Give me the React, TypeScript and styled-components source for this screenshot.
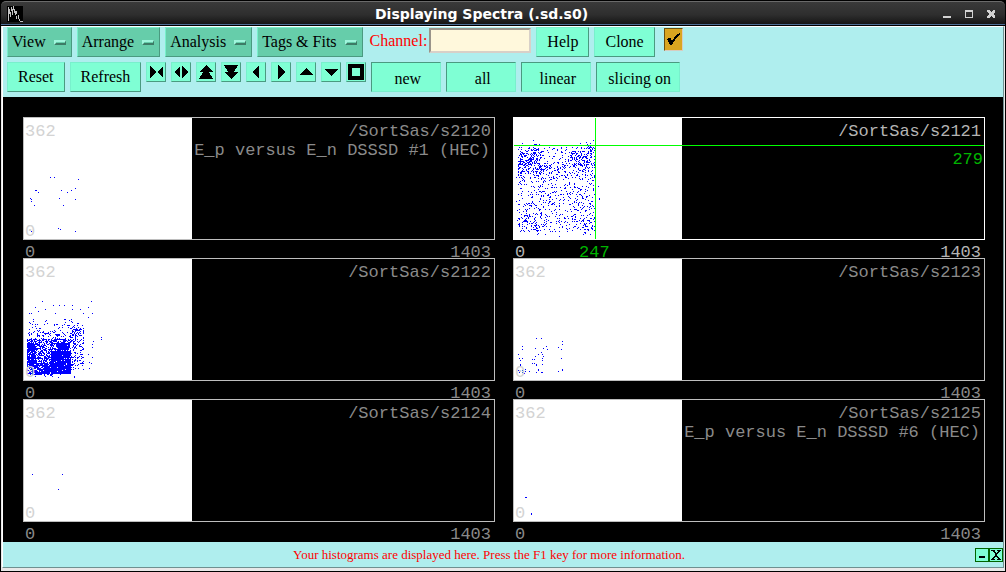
import React from "react";
import styled, { createGlobalStyle, css } from "styled-components";

const GlobalStyle = createGlobalStyle`
  * { box-sizing: border-box; }
  html, body { margin: 0; padding: 0; background: #000; }
  button, input { font: inherit; margin: 0; }
`;

const serif = `"Liberation Serif", "Times New Roman", serif`;
const mono = `"Liberation Mono", "Courier New", monospace`;

const raised = css`
  border: 1px solid;
  border-color: #78f0cc #4a9a80 #4a9a80 #78f0cc;
`;
const sunken = css`
  border: 1px solid;
  border-color: #4a9a80 #78f0cc #78f0cc #4a9a80;
`;

const Window = styled.div`
  display: flex;
  flex-direction: column;
  min-height: 100vh;
  padding: 1px;
  background: #000;
  color: #000;
  font: 16px/18px ${serif};
`;

const TitleBar = styled.header`
  display: flex;
  align-items: center;
  height: 25px;
  padding: 0 7px 0 6px;
  border-top: 1px solid #6a6a6a;
  border-bottom: 1px solid #000;
  border-radius: 5px 5px 0 0;
  background: linear-gradient(#3a3a3a, #2e2e2e 55%, #171717 94%, #4e6f96 95%);
`;

const Title = styled.h1`
  flex: 1;
  margin: 0;
  text-align: center;
  color: #fff;
  font: bold 14px/20px "DejaVu Sans", sans-serif;
`;

const WindowControls = styled.div`
  display: flex;
  gap: 8px;
`;

const ControlButton = styled.button`
  display: flex;
  align-items: center;
  justify-content: center;
  width: 14px;
  height: 16px;
  padding: 0;
  border: 0;
  background: none;
`;

const Client = styled.main`
  flex: 1;
  display: flex;
  flex-direction: column;
  border: 1px solid;
  border-color: #fff #6f9090 #6f9090 #fff;
  background: #000;
`;

const Frame = styled.div`
  flex: 1;
  display: flex;
  padding: 0 1px 3px;
  background: #e8e8e8;
`;

const Toolbar = styled.div`
  display: flex;
  flex-direction: column;
  gap: 5px;
  padding: 0 4px 5px;
  background: #afeeee;
`;

const ToolRow = styled.div`
  display: flex;
  align-items: flex-start;
  gap: 5px;
`;

const PushButton = styled.button<{ $set?: boolean }>`
  height: 30px;
  padding: 0 10px;
  background: #7fffd4;
  color: #000;
  ${(p) => (p.$set ? sunken : raised)}
  ${(p) => p.$set && "min-width: 70px; padding: 4px 8px 0 11px;"}
`;

const MenuButton = styled.button`
  display: flex;
  align-items: center;
  gap: 8px;
  height: 30px;
  padding: 0 5px 0 4px;
  background: #66cdaa;
  color: #000;
  ${raised}
`;

const MenuMark = styled.span`
  width: 12px;
  height: 5px;
  border: 1px solid;
  border-width: 2px 1px 2px 2px;
  border-color: #9ff5dc #3d7b66 #3d7b66 #9ff5dc;
  background: #66cdaa;
`;

const ArrowButton = styled.button`
  display: flex;
  width: 20px;
  height: 20px;
  padding: 0;
  background: #7fffd4;
  ${raised}
`;

const ChannelField = styled.label`
  display: flex;
  gap: 2px;
  padding: 1px 0 0 2px;
  color: #f00;
  line-height: 25px;
`;

const ChannelInput = styled.input`
  width: 102px;
  height: 25px;
  border: 2px solid;
  border-color: #9a948a #d8d0c8 #d8d0c8 #9a948a;
  background: #fff8dc;
`;

const TickLabel = styled.label`
  position: relative;
  display: flex;
  margin: 1px 0 0 4px;
`;

const TickBox = styled.input`
  appearance: none;
  width: 19px;
  height: 23px;
  border: 1px solid;
  border-color: #6b5010 #d8ccc0 #d8ccc0 #6b5010;
  background: #daa520;
`;

const TickMark = styled.svg`
  position: absolute;
  inset: 0;
  pointer-events: none;
`;

const Plots = styled.section`
  flex: 1;
  display: grid;
  grid-template-columns: 1fr 1fr;
  grid-auto-rows: 1fr;
  column-gap: 18px;
  padding: 20px 18px 2px 20px;
  font: 17px/19px ${mono};
`;

const Plot = styled.figure<{ $selected?: boolean }>`
  display: flex;
  flex-direction: column;
  min-width: 0;
  margin: 0;
  color: ${(p) => (p.$selected ? "#b4b4b4" : "#8a8a8a")};
`;

const PlotBox = styled.div<{ $selected?: boolean }>`
  position: relative;
  flex: 1;
  display: flex;
  min-height: 123px;
  border: 1px solid ${(p) => (p.$selected ? "#fff" : "#bebebe")};
`;

const MapPane = styled.div`
  position: relative;
  display: flex;
  flex-direction: column;
  justify-content: space-between;
  width: 168px;
  padding: 4px 1px 0;
  background: #fff;
  color: #d3d3d3;
`;

const Points = styled.svg`
  position: absolute;
  left: 0;
  bottom: 0;
`;

const OverLabel = styled.span`
  position: relative;

  &:last-child {
    line-height: 15px;
  }
`;

const Caption = styled.figcaption`
  flex: 1;
  padding: 4px 3px 0 0;
  text-align: right;
  white-space: nowrap;
`;

const Comment = styled.div`
  padding-right: 1px;
`;

const Axis = styled.div`
  position: relative;
  display: flex;
  justify-content: space-between;
  height: 18px;
  padding: 3px 4px 0 2px;
`;

const CrossX = styled.i`
  position: absolute;
  top: 0;
  bottom: 0;
  left: 81px;
  width: 1px;
  background: #0f0;
`;

const CrossY = styled.i`
  position: absolute;
  left: 0;
  right: 0;
  top: 27px;
  height: 1px;
  background: #0f0;
`;

const CursorY = styled.span`
  position: absolute;
  top: 32px;
  right: 1px;
  color: #00b400;
`;

const CursorX = styled.span`
  position: absolute;
  left: 66px;
  color: #00b400;
`;

const StatusBar = styled.footer`
  display: flex;
  align-items: center;
  height: 25px;
  background: #afeeee;
`;

const StatusText = styled.p`
  flex: 1;
  margin: 0;
  text-align: center;
  color: #f00;
  font-size: 13px;
`;

const StatusButton = styled.button`
  display: flex;
  width: 14px;
  height: 14px;
  padding: 0;
  border: 1px solid #006400;
  background: #7fffd4;
`;

const ARROWS: [string, string][] = [
  ["Compress", "M4 4L10 10L4 16ZM17 4L11 10L17 16Z"],
  ["Expand", "M9 4L3 10L9 16ZM11 4L17 10L11 16Z"],
  ["Scale up", "M10 3L17 10H13L17 17H3L7 10H3Z"],
  ["Scale down", "M10 17L17 10H13L17 3H3L7 10H3Z"],
  ["Left", "M13 3V17L6 10Z"],
  ["Right", "M7 3V17L14 10Z"],
  ["Up", "M3 13H17L10 6Z"],
  ["Down", "M3 7H17L10 14Z"],
  ["Full", "M2 2H18V18H2ZM6 6V14H14V6Z"],
];

type Dot = [number, number, number?, number?];

// Deterministic noise, so that dense spectra look the same on every render.
function noise(seed: number) {
  let s = seed;
  return () => {
    s = (s * 1664525 + 1013904223) >>> 0;
    return s / 4294967296;
  };
}

// Fills each region [x0, y0, x1, y1, count] with that many counts.
function scatter(seed: number, regions: number[][]): Dot[] {
  const r = noise(seed);
  const out: Dot[] = [];
  for (const [x0, y0, x1, y1, n] of regions) {
    for (let i = 0; i < n; i++) {
      out.push([Math.floor(x0 + r() * (x1 - x0)), Math.floor(y0 + r() * (y1 - y0))]);
    }
  }
  return out;
}

const s2120: Dot[] = [
  [26, 59], [30, 59], [54, 61], [11, 72, 2], [14, 74], [37, 72], [43, 74], [47, 72],
  [51, 70], [6, 80], [7, 81], [7, 83], [35, 80], [51, 81], [10, 87], [39, 87],
  [34, 110], [36, 111], [7, 113], [51, 113],
];
const s2121 = scatter(41, [
  [4, 29, 82, 114, 760], [4, 29, 28, 58, 110], [6, 35, 20, 47, 60], [56, 33, 78, 48, 110],
  [4, 45, 82, 60, 120], [4, 95, 28, 113, 60], [58, 88, 82, 113, 60], [74, 28, 82, 35, 18],
  [2, 50, 5, 110, 6], [6, 22, 34, 28, 8], [66, 22, 85, 28, 8], [10, 114, 78, 119, 9],
  [83, 66, 86, 82, 3],
]);
const s2122 = scatter(77, [
  [3, 80, 47, 115, 1300], [3, 84, 12, 108, 260], [27, 92, 47, 115, 900], [6, 104, 30, 116, 300],
  [33, 84, 46, 96, 220], [4, 72, 50, 82, 90], [46, 66, 60, 112, 170], [48, 70, 58, 78, 26],
  [4, 60, 56, 76, 60], [4, 115, 52, 119, 14], [56, 56, 70, 112, 6],
]).concat([
  [18, 42], [67, 42], [11, 48], [21, 50], [29, 46], [35, 46], [40, 46], [48, 46],
  [48, 50], [56, 50], [64, 48], [5, 54], [7, 54], [14, 52], [31, 54], [59, 54],
  [68, 54], [64, 58], [77, 78], [77, 80], [69, 82], [68, 85], [64, 95], [68, 98], [65, 103],
]);
const s2123: Dot[] = [
  [22, 79], [27, 79], [48, 82], [48, 85], [8, 87], [8, 90], [21, 89], [29, 89], [32, 87],
  [33, 90], [44, 88], [47, 90], [4, 95], [24, 95], [27, 93], [28, 95], [21, 97], [29, 97],
  [5, 99], [8, 99], [6, 101], [18, 100], [20, 100], [28, 99], [28, 101], [47, 99],
  [6, 105, 1, 2], [18, 104], [20, 104], [22, 105, 1, 2], [28, 105], [24, 110, 1, 2],
  [48, 110, 1, 2], [4, 111], [8, 111], [11, 110], [9, 112], [11, 112], [15, 112],
  [5, 113], [10, 114], [8, 113], [22, 113], [27, 113, 2], [44, 112],
];
const s2124: Dot[] = [[8, 74], [38, 74], [34, 89]];
const s2125: Dot[] = [[11, 97, 2], [17, 113, 1, 2]];

interface Spectrum {
  name: string;
  comment?: string;
  dots: Dot[];
  selected?: boolean;
}

const SPECTRA: Spectrum[] = [
  { name: "/SortSas/s2120", comment: "E_p versus E_n DSSSD #1 (HEC)", dots: s2120 },
  { name: "/SortSas/s2121", dots: s2121, selected: true },
  { name: "/SortSas/s2122", dots: s2122 },
  { name: "/SortSas/s2123", dots: s2123 },
  { name: "/SortSas/s2124", dots: s2124 },
  { name: "/SortSas/s2125", comment: "E_p versus E_n DSSSD #6 (HEC)", dots: s2125 },
];

function SpectrumPlot({ name, comment, dots, selected }: Spectrum) {
  const path = dots.map(([x, y, w = 1, h = 1]) => `M${x} ${y}h${w}v${h}h-${w}z`).join("");
  return (
    <Plot $selected={selected}>
      <PlotBox $selected={selected}>
        <MapPane>
          <Points width="168" height="121" shapeRendering="crispEdges" aria-hidden="true">
            <path d={path} fill="#0000ff" />
          </Points>
          {!selected && <OverLabel>362</OverLabel>}
          {!selected && <OverLabel>0</OverLabel>}
        </MapPane>
        <Caption>
          <div>{name}</div>
          {comment && <Comment>{comment}</Comment>}
        </Caption>
        {selected && (
          <>
            <CrossX />
            <CrossY />
            <CursorY>279</CursorY>
          </>
        )}
      </PlotBox>
      <Axis>
        <span>0</span>
        {selected && <CursorX>247</CursorX>}
        <span>1403</span>
      </Axis>
    </Plot>
  );
}

export default function App() {
  return (
    <>
      <GlobalStyle />
      <Window>
        <TitleBar>
          <svg width="16" height="16" shapeRendering="crispEdges" aria-hidden="true">
            <rect width="16" height="16" fill="#000" />
            <path d="M1 15V1M2 8V3M3 11V6M4 5V1M5 9V3M6 4V0M7 7V3M8 5V9M9 8V5M9 10V13M11 9V13M12 13V15M13 15H16" stroke="#c4c4c4" fill="none" />
          </svg>
          <Title>Displaying Spectra (.sd.s0)</Title>
          <WindowControls>
            <ControlButton aria-label="Minimize">
              <svg width="10" height="10" shapeRendering="crispEdges"><path d="M1 7H9V9H1Z" fill="#d2d2d2" /></svg>
            </ControlButton>
            <ControlButton aria-label="Maximize">
              <svg width="10" height="10" shapeRendering="crispEdges"><path d="M1 1H9V9H1ZM2 3V8H8V3Z" fill="#d2d2d2" fillRule="evenodd" /></svg>
            </ControlButton>
            <ControlButton aria-label="Close">
              <svg width="10" height="10" shapeRendering="crispEdges"><path d="M1 1H3L5 3L7 1H9V3L7 5L9 7V9H7L5 7L3 9H1V7L3 5L1 3Z" fill="#d2d2d2" /></svg>
            </ControlButton>
          </WindowControls>
        </TitleBar>
        <Frame>
          <Client>
            <Toolbar>
              <ToolRow>
                {["View", "Arrange", "Analysis", "Tags & Fits"].map((m) => (
                  <MenuButton key={m} aria-haspopup="menu">
                    {m}
                    <MenuMark />
                  </MenuButton>
                ))}
                <ChannelField>
                  Channel:
                  <ChannelInput type="text" />
                </ChannelField>
                <PushButton>Help</PushButton>
                <PushButton>Clone</PushButton>
                <TickLabel>
                  <TickBox type="checkbox" defaultChecked aria-label="Automatic update" />
                  <TickMark width="19" height="23" shapeRendering="crispEdges" aria-hidden="true">
                    <path d="M3 11L5 10H7L8 13L13 6L16 5V6L11 12L8 17H6Z" fill="#000" />
                  </TickMark>
                </TickLabel>
              </ToolRow>
              <ToolRow>
                <PushButton>Reset</PushButton>
                <PushButton>Refresh</PushButton>
                {ARROWS.map(([label, d]) => (
                  <ArrowButton key={label} aria-label={label}>
                    <svg width="18" height="18" viewBox="1 1 18 18" shapeRendering="crispEdges">
                      <path d={d} fill="#000" fillRule="evenodd" />
                    </svg>
                  </ArrowButton>
                ))}
                {["new", "all", "linear", "slicing on"].map((t) => (
                  <PushButton key={t} $set>
                    {t}
                  </PushButton>
                ))}
              </ToolRow>
            </Toolbar>
            <Plots>
              {SPECTRA.map((s) => (
                <SpectrumPlot key={s.name} {...s} />
              ))}
            </Plots>
            <StatusBar>
              <StatusText>Your histograms are displayed here. Press the F1 key for more information.</StatusText>
              <StatusButton aria-label="Hide message">
                <svg width="12" height="12" shapeRendering="crispEdges"><path d="M3 7H9V9H3Z" /></svg>
              </StatusButton>
              <StatusButton aria-label="Close message">
                <svg width="12" height="12" shapeRendering="crispEdges"><path d="M1 1H5V2H4L6 4L8 2H7V1H11V2H10L7 5V6L10 10H11V11H7V10H8L6 7L4 10H5V11H1V10H2L5 6V5L2 2H1Z" /></svg>
              </StatusButton>
            </StatusBar>
          </Client>
        </Frame>
      </Window>
    </>
  );
}
